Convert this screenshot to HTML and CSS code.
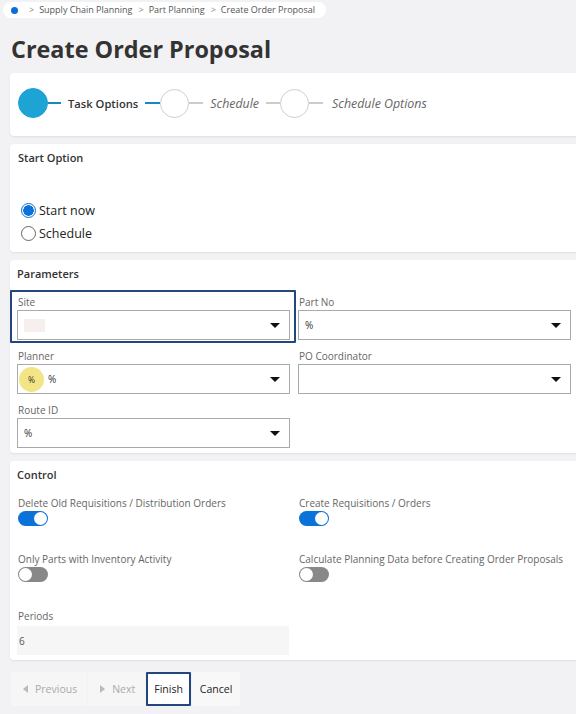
FILE: index.html
```html
<!DOCTYPE html>
<html>
<head>
<meta charset="utf-8">
<link rel="stylesheet" href="styles.css">
</head>
<body>
<div class="page">
  <nav class="breadcrumb">
    <span class="home-dot"></span>
    <span class="chev">&gt;</span><span class="crumb">Supply Chain Planning</span>
    <span class="chev">&gt;</span><span class="crumb">Part Planning</span>
    <span class="chev">&gt;</span><span class="crumb">Create Order Proposal</span>
  </nav>

  <h1 class="title">Create Order Proposal</h1>

  <section class="card stepper">
    <span class="step-circle active"></span>
    <span class="step-line blue first"></span>
    <span class="step-label active">Task Options</span>
    <span class="step-line blue"></span>
    <span class="step-circle"></span>
    <span class="step-line"></span>
    <span class="step-label">Schedule</span>
    <span class="step-line"></span>
    <span class="step-circle"></span>
    <span class="step-line"></span>
    <span class="step-label last">Schedule Options</span>
  </section>

  <section class="card start-card">
    <h2 class="card-title">Start Option</h2>
    <div class="radios">
      <label class="radio"><span class="radio-dot checked"></span>Start now</label>
      <label class="radio"><span class="radio-dot"></span>Schedule</label>
    </div>
  </section>

  <section class="card params-card">
    <h2 class="card-title">Parameters</h2>
    <div class="grid">
      <div class="field focused">
        <div class="field-label">Site</div>
        <div class="select"><span class="redacted"></span><span class="caret"></span></div>
      </div>
      <div class="field">
        <div class="field-label">Part No</div>
        <div class="select"><span class="value">%</span><span class="caret"></span></div>
      </div>
      <div class="field">
        <div class="field-label">Planner</div>
        <div class="select"><span class="avatar">%</span><span class="value">%</span><span class="caret"></span></div>
      </div>
      <div class="field">
        <div class="field-label">PO Coordinator</div>
        <div class="select"><span class="value"></span><span class="caret"></span></div>
      </div>
      <div class="field">
        <div class="field-label">Route ID</div>
        <div class="select"><span class="value">%</span><span class="caret"></span></div>
      </div>
    </div>
  </section>

  <section class="card control-card">
    <h2 class="card-title">Control</h2>
    <div class="grid">
      <div class="toggle-field">
        <div class="field-label">Delete Old Requisitions / Distribution Orders</div>
        <span class="toggle on"><span class="knob"></span></span>
      </div>
      <div class="toggle-field">
        <div class="field-label">Create Requisitions / Orders</div>
        <span class="toggle on"><span class="knob"></span></span>
      </div>
      <div class="toggle-field">
        <div class="field-label">Only Parts with Inventory Activity</div>
        <span class="toggle"><span class="knob"></span></span>
      </div>
      <div class="toggle-field">
        <div class="field-label">Calculate Planning Data before Creating Order Proposals</div>
        <span class="toggle"><span class="knob"></span></span>
      </div>
      <div class="periods">
        <div class="field-label">Periods</div>
        <div class="readonly">6</div>
      </div>
    </div>
  </section>

  <div class="buttons">
    <button class="btn disabled"><span class="tri left"></span>Previous</button>
    <button class="btn disabled"><span class="tri right"></span>Next</button>
    <button class="btn primary">Finish</button>
    <button class="btn cancel">Cancel</button>
  </div>
</div>
</body>
</html>
```

FILE: styles.css
```css
* { box-sizing: border-box; }
html, body { margin: 0; padding: 0; }
body {
  background: #f2f1f4;
  font-family: "Open Sans", "Noto Sans", sans-serif;
  color: #333;
  overflow: hidden;
  width: 576px;
  height: 714px;
}
.page { padding-top: 2px; }

.breadcrumb {
  display: flex;
  width: max-content;
  align-items: center;
  height: 16px;
  margin-left: 3px;
  padding: 0 11px 0 8px;
  background: #fff;
  border-radius: 8px;
  font-size: 9px;
  line-height: 16px;
  color: #555;
}
.home-dot {
  width: 7px; height: 7px;
  border-radius: 50%;
  background: #0b6ed6;
  margin-right: 5px;
}
.chev { color: #888; margin: 0 5px 0 6px; font-size: 9px; }

.title {
  margin: 15px 0 8px 11px;
  font-size: 23.4px;
  font-weight: 700;
  line-height: 32px;
  color: #333;
}

.card {
  background: #fff;
  margin: 0 -10px 8px 10px;
  border-radius: 4px;
  box-shadow: 0 1px 2px rgba(0,0,0,0.08);
}

.stepper {
  display: flex;
  align-items: center;
  height: 63px;
  padding: 0 0 3px 8px;
}
.step-circle {
  width: 29px; height: 29px;
  border-radius: 50%;
  border: 1px solid #cfcfcf;
  background: #fff;
  flex: none;
}
.step-circle.active { width: 30px; height: 30px; background: #1ea4d4; border-color: #1ea4d4; }
.step-line { width: 14px; height: 2px; background: #cccccc; flex: none; }
.step-line.first { width: 13px; }
.step-line.blue { background: #1688c6; width: 15px; }
.step-line.blue.first { width: 13px; }
.step-label {
  font-size: 12.4px;
  font-style: italic;
  color: #666;
  margin: 0 7px;
  white-space: nowrap;
}
.step-label.last { margin-left: 9px; }
.step-label.active { font-style: normal; font-weight: 600; color: #333; font-size: 11.2px; }

.card-title {
  margin: 0;
  font-size: 11px;
  font-weight: 600;
  line-height: 16px;
  color: #333;
}

.start-card { padding: 6px 8px 8px 8px; height: 108px; }
.radios { margin-top: 33px; display: flex; flex-direction: column; }
.radio {
  display: flex; align-items: center;
  font-size: 12.5px; line-height: 23px; color: #222;
}
.radio-dot {
  width: 15px; height: 15px;
  border-radius: 50%;
  border: 1px solid #666;
  margin: 0 3px 0 3px;
  background: #fff;
}
.radio-dot.checked {
  border: 1px solid #0b6ed6;
  background: radial-gradient(circle, #0b72d9 0 5px, #fff 5.5px);
}

.params-card { padding: 6px 0 5px 7px; height: 193px; }
.control-card { padding: 6px 0 5px 7px; height: 199px; }
.grid {
  display: grid;
  grid-template-columns: 273px 273px;
  column-gap: 8px;
  margin-top: 12px;
}
.field { position: relative; margin-bottom: 8px; }
.field.focused::after {
  content: "";
  position: absolute;
  top: -4px; bottom: -3px; left: -7px; right: -6px;
  border: 2px solid #24467f;
  border-radius: 1px;
}
.field-label {
  font-size: 10px;
  line-height: 16px;
  color: #666;
  padding-left: 1px;
  white-space: nowrap;
}
.select {
  height: 30px;
  border: 1px solid #aaa;
  display: flex;
  align-items: center;
  padding: 0 9px 0 6px;
  font-size: 10px;
  color: #333;
}
.select .value { flex: 1; }
.redacted {
  width: 21px; height: 13px;
  background: #f7eeee;
  flex: none;
  margin-right: auto;
}
.caret {
  width: 0; height: 0;
  border-left: 5px solid transparent;
  border-right: 5px solid transparent;
  border-top: 5px solid #111;
  margin-left: auto;
}
.avatar {
  width: 25px; height: 25px;
  border-radius: 50%;
  background: #f3e486;
  display: flex; align-items: center; justify-content: center;
  font-size: 8.5px;
  margin: 0 4px 0 -5px;
  flex: none;
}

.toggle-field { height: 56px; }
.toggle {
  display: block;
  width: 30px; height: 15px;
  border-radius: 8px;
  background: #888;
  position: relative;
  margin-left: 1px;
}
.toggle.on { background: #0b72d9; }
.knob {
  position: absolute;
  top: 1px; left: 1px;
  width: 13px; height: 13px;
  border-radius: 50%;
  background: #fff;
}
.toggle.on .knob { left: auto; right: 1px; }
.periods { margin-top: 1px; }
.readonly {
  margin-top: 2px;
  height: 29px;
  background: #f6f6f6;
  font-size: 10px;
  color: #555;
  display: flex;
  align-items: center;
  padding-left: 2px;
  width: 272px;
}

.buttons {
  display: flex;
  margin: 12px 0 0 11px;
  gap: 1px;
}
.btn {
  font-family: "Open Sans", "Noto Sans", sans-serif;
  font-size: 10.5px;
  height: 34px;
  border: 0;
  border-radius: 3px;
  padding: 0 8px;
  display: flex; align-items: center;
  background: #f8f8f8;
  color: #222;
}
.btn.disabled { background: #f6f6f7; color: #aaa; padding: 0 10px 0 12px; }
.btn.primary { background: #fff; border: 2px solid #24467f; border-radius: 1px; padding: 0 6px; }
.tri { width: 0; height: 0; margin-right: 7px; }
.tri.left { border-top: 4px solid transparent; border-bottom: 4px solid transparent; border-right: 5px solid #bbb; }
.tri.right { border-top: 4px solid transparent; border-bottom: 4px solid transparent; border-left: 5px solid #bbb; }
```
